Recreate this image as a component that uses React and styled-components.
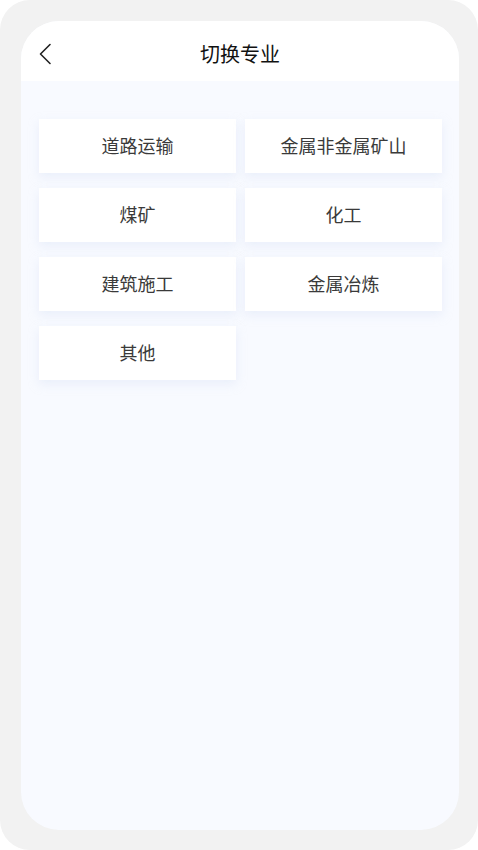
import styled, { createGlobalStyle } from "styled-components";

const GlobalStyle = createGlobalStyle`
  html, body {
    margin: 0;
    padding: 0;
    background: #ffffff;
  }
  * {
    box-sizing: border-box;
  }
`;

const Frame = styled.div`
  width: 478px;
  height: 850px;
  background-color: #f2f2f2;
  border-radius: 30px;
  padding: 21px 19px 20px 21px;
  font-family: "Noto Sans CJK SC", "Noto Sans", sans-serif;
`;

const Screen = styled.div`
  height: 100%;
  border-radius: 38px;
  overflow: hidden;
  background-color: #f8faff;
  display: flex;
  flex-direction: column;
`;

const Header = styled.div`
  height: 60px;
  flex-shrink: 0;
  padding-top: 6px;
  background-color: #ffffff;
  display: flex;
  align-items: center;
  justify-content: center;
  position: relative;
`;

const BackButton = styled.button`
  position: absolute;
  left: 12px;
  top: 19px;
  width: 24px;
  height: 28px;
  padding: 0;
  border: none;
  background: none;
  display: flex;
  align-items: center;
  justify-content: center;
  cursor: pointer;
`;

const Title = styled.h1`
  margin: 0;
  font-size: 20px;
  font-weight: 400;
  color: #111;
  line-height: 1;
`;

const Grid = styled.div`
  display: grid;
  grid-template-columns: 1fr 1fr;
  column-gap: 9px;
  row-gap: 15px;
  padding: 38px 17px 0 18px;
`;

const Option = styled.div`
  height: 54px;
  padding-bottom: 2px;
  background-color: #ffffff;
  box-shadow: 0 4px 10px rgba(205, 218, 240, 0.35);
  display: flex;
  align-items: center;
  justify-content: center;
  font-size: 18px;
  color: #3a3a3a;
  cursor: pointer;
`;

const majors = ["道路运输", "金属非金属矿山", "煤矿", "化工", "建筑施工", "金属冶炼", "其他"];

const App = () => {
  return (
    <>
      <GlobalStyle />
      <Frame>
        <Screen>
          <Header>
            <BackButton aria-label="返回">
              <svg width="14" height="22" viewBox="0 0 14 22" fill="none">
                <path d="M12 1.5 L2.5 11 L12 20.5" stroke="#222" strokeWidth="1.6" strokeLinecap="round" strokeLinejoin="round" />
              </svg>
            </BackButton>
            <Title>切换专业</Title>
          </Header>
          <Grid>
            {majors.map((m) => (
              <Option key={m}>{m}</Option>
            ))}
          </Grid>
        </Screen>
      </Frame>
    </>
  );
};

export default App;
